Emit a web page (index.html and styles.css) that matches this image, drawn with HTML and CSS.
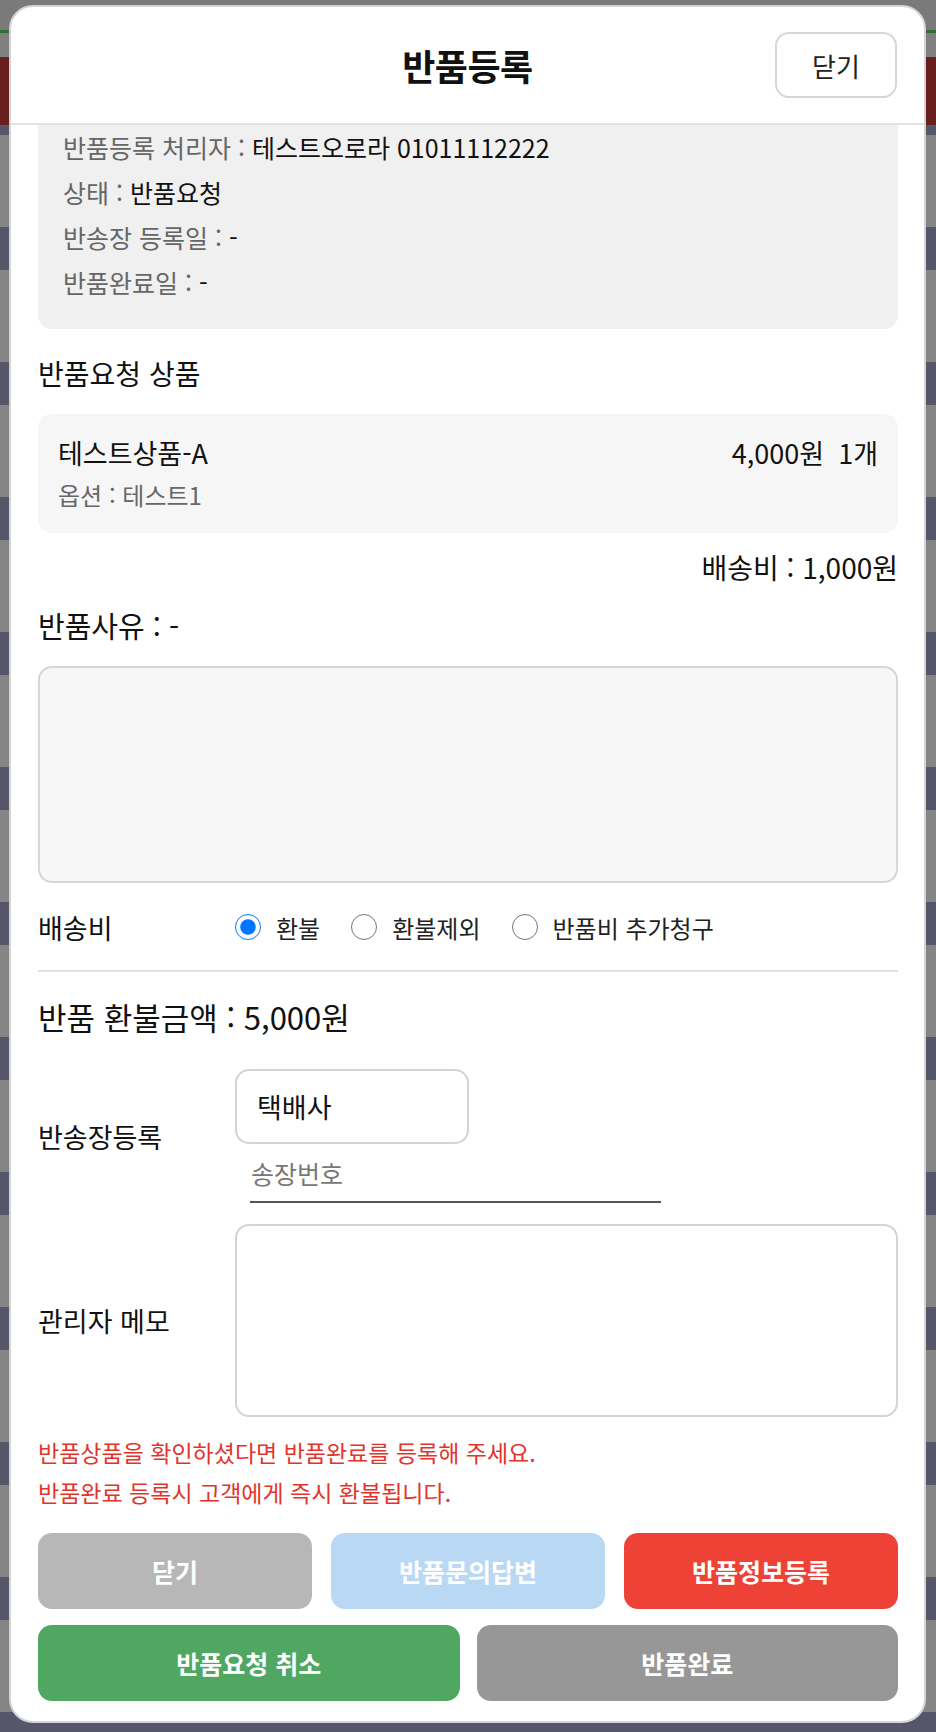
FILE: index.html
```html
<!DOCTYPE html>
<html lang="ko">
<head>
<meta charset="utf-8">
<title>반품등록</title>
<link rel="stylesheet" href="styles.css">
</head>
<body>
<div class="page">
  <div class="modal">
    <header class="modal-head">
      <h1 class="modal-title">반품등록</h1>
      <button class="head-close" type="button">닫기</button>
    </header>
    <div class="modal-body">
      <div class="info-box">
        <p class="info-line"><span class="k">반품등록 처리자 : </span><span class="v">테스트오로라 01011112222</span></p>
        <p class="info-line"><span class="k">상태 : </span><span class="v">반품요청</span></p>
        <p class="info-line"><span class="k">반송장 등록일 : </span><span class="v">-</span></p>
        <p class="info-line"><span class="k">반품완료일 : </span><span class="v">-</span></p>
      </div>

      <h2 class="sec-title">반품요청 상품</h2>
      <div class="product">
        <div class="prod-row">
          <span class="prod-name">테스트상품-A</span>
          <span class="prod-price">4,000원<span class="prod-qty">1개</span></span>
        </div>
        <div class="prod-opt">옵션 : 테스트1</div>
      </div>
      <div class="ship-fee">배송비 : 1,000원</div>

      <h2 class="reason-title">반품사유 : -</h2>
      <textarea class="reason"></textarea>

      <div class="form-row radio-row">
        <span class="label">배송비</span>
        <div class="radios">
          <label class="radio"><input type="radio" name="fee" checked><span>환불</span></label>
          <label class="radio"><input type="radio" name="fee"><span>환불제외</span></label>
          <label class="radio"><input type="radio" name="fee"><span>반품비 추가청구</span></label>
        </div>
      </div>
      <hr class="divider">

      <div class="refund">반품 환불금액 : 5,000원</div>

      <div class="form-row ship-row">
        <span class="label">반송장등록</span>
        <div class="ship-fields">
          <div class="carrier">택배사</div>
          <input class="invoice" type="text" placeholder="송장번호">
        </div>
      </div>

      <div class="form-row memo-row">
        <span class="label">관리자 메모</span>
        <textarea class="memo"></textarea>
      </div>

      <p class="notice">반품상품을 확인하셨다면 반품완료를 등록해 주세요.<br>반품완료 등록시 고객에게 즉시 환불됩니다.</p>

      <div class="btn-row three">
        <button class="btn gray" type="button">닫기</button>
        <button class="btn sky" type="button">반품문의답변</button>
        <button class="btn red" type="button">반품정보등록</button>
      </div>
      <div class="btn-row two">
        <button class="btn green" type="button">반품요청 취소</button>
        <button class="btn dark" type="button">반품완료</button>
      </div>
    </div>
  </div>
</div>
</body>
</html>
```

FILE: styles.css
```css
* { box-sizing: border-box; }

html, body {
  margin: 0;
  padding: 0;
}

body {
  font-family: "Noto Sans CJK KR", "Noto Sans", sans-serif;
  color: #1e1e1e;
  background-color: #7e7e7e;
  background-image:
    linear-gradient(180deg, #7a7a7a 0 30px, #2f6f36 30px 33px, #808080 33px 57px, #6a1f1f 57px 125px, transparent 125px),
    repeating-linear-gradient(180deg, #858585 0 92px, #56566a 92px 135px);
  min-height: 1732px;
}

.page {
  padding-top: 5px;
  padding-left: 9px;
}

.modal {
  width: 917px;
  background: #fff;
  border: 2px solid #d4d4d4;
  border-radius: 24px;
  overflow: hidden;
}

/* header */
.modal-head {
  position: relative;
  height: 118px;
  border-bottom: 2px solid #e2e2e2;
  display: flex;
  align-items: center;
  justify-content: center;
}

.modal-title {
  margin: 0;
  font-size: 36px;
  font-weight: 700;
  letter-spacing: -0.5px;
  color: #111;
}

.head-close {
  position: absolute;
  right: 27px;
  top: 25px;
  width: 122px;
  height: 66px;
  background: #fff;
  border: 2px solid #d6d6d6;
  border-radius: 14px;
  font-family: inherit;
  font-size: 26px;
  color: #222;
}

/* body */
.modal-body {
  padding: 0 26px 20px 27px;
}

.info-box {
  background: #f0f0f0;
  border-radius: 0 0 14px 14px;
  padding: 0 25px 24px;
}

.info-line {
  margin: 0;
  line-height: 45px;
  font-size: 25px;
}

.info-line .k { color: #666; }
.info-line .v { color: #111; }

.sec-title {
  margin: 26px 0 0;
  font-size: 28px;
  font-weight: 400;
  line-height: 36px;
  color: #111;
}

.product {
  margin-top: 23px;
  background: #f6f6f6;
  border-radius: 14px;
  padding: 22px 20px;
}

.prod-row {
  display: flex;
  justify-content: space-between;
  line-height: 34px;
  font-size: 27px;
  color: #111;
}

.prod-qty { margin-left: 14px; }

.prod-opt {
  margin-top: 9px;
  line-height: 32px;
  font-size: 24px;
  color: #666;
}

.ship-fee {
  margin-top: 17px;
  text-align: right;
  line-height: 34px;
  font-size: 28px;
  color: #111;
}

.reason-title {
  margin: 23px 0 0;
  font-size: 29px;
  font-weight: 400;
  line-height: 36px;
  color: #111;
}

.reason {
  display: block;
  margin-top: 23px;
  width: 100%;
  height: 217px;
  background: #f7f7f7;
  border: 2px solid #d6d6d6;
  border-radius: 14px;
  resize: none;
}

.form-row {
  display: flex;
  align-items: center;
}

.form-row .label {
  flex: 0 0 197px;
  font-size: 27px;
  color: #111;
}

.radio-row {
  margin-top: 24px;
  height: 40px;
}

.radios {
  display: flex;
  align-items: center;
  gap: 31px;
}

.radio {
  display: flex;
  align-items: center;
  gap: 15px;
  font-size: 24px;
  color: #222;
}

.radio input {
  width: 26px;
  height: 26px;
  margin: 0;
}

.divider {
  margin: 23px 0 0;
  border: 0;
  height: 2px;
  background: #e2e2e2;
}

.refund {
  margin-top: 25px;
  line-height: 40px;
  font-size: 31px;
  color: #111;
}

.ship-row {
  margin-top: 32px;
}

.ship-fields {
  display: flex;
  flex-direction: column;
}

.carrier {
  width: 234px;
  height: 75px;
  border: 2px solid #d4d4d4;
  border-radius: 14px;
  padding-left: 20px;
  display: flex;
  align-items: center;
  font-size: 27px;
  color: #111;
}

.invoice {
  margin-left: 15px;
  width: 411px;
  height: 59px;
  border: 0;
  border-bottom: 2px solid #555;
  padding: 0 1px;
  font-family: inherit;
  font-size: 25px;
  outline: none;
  background: transparent;
}

.invoice::placeholder { color: #777; }

.memo-row {
  margin-top: 21px;
}

.memo {
  flex: 1;
  height: 193px;
  border: 2px solid #d4d4d4;
  border-radius: 14px;
  background: #fff;
  resize: none;
}

.notice {
  margin: 15px 0 0;
  line-height: 40px;
  font-size: 23px;
  color: #e3342c;
}

.btn-row {
  display: grid;
}

.btn-row.three {
  margin-top: 21px;
  grid-template-columns: repeat(3, 1fr);
  gap: 19px;
}

.btn-row.two {
  margin-top: 16px;
  grid-template-columns: repeat(2, 1fr);
  gap: 17px;
}

.btn {
  height: 76px;
  border: 0;
  border-radius: 14px;
  font-family: inherit;
  font-size: 25px;
  font-weight: 600;
  color: #fff;
}

.btn.gray { background: #b7b7b7; }
.btn.sky { background: #b8d8f3; }
.btn.red { background: #ee4237; }
.btn.green { background: #4fa762; }
.btn.dark { background: #979797; }
```
